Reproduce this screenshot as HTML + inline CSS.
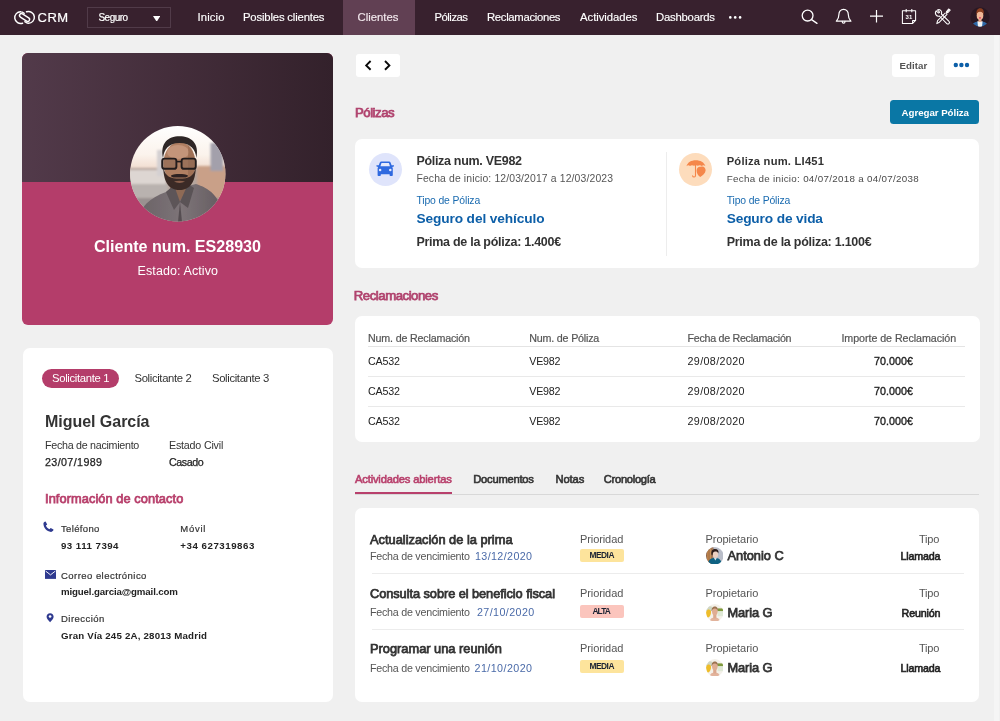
<!DOCTYPE html>
<html lang="es"><head><meta charset="utf-8"><title>CRM - Cliente ES28930</title>
<style>
html,body{margin:0;padding:0}
body{width:1000px;height:721px;position:relative;overflow:hidden;background:#f0f0f0;font-family:"Liberation Sans",sans-serif}
.abs{position:absolute;display:block}
.t{position:absolute;white-space:nowrap;line-height:1;margin:0;padding:0}
#wrap{position:absolute;left:0;top:0;width:1000px;height:721px;will-change:transform}
</style></head><body><div id="wrap">
<!-- NAV -->
<div class="abs" style="left:0;top:0;width:1000px;height:34.6px;background:#38212e"></div>
<div class="abs" style="left:343px;top:0;width:72px;height:34.6px;background:#614053"></div>
<div class="abs" style="left:87.3px;top:7.4px;width:83.3px;height:21px;box-sizing:border-box;border:1px solid #513b49"></div>
<svg class="abs" style="left:153px;top:15.5px" width="7.4" height="5.8" viewBox="0 0 7.4 5.8"><path d="M0 0H7.4L3.7 5.8Z" fill="#fff"/></svg>
<!-- logo -->
<svg class="abs" style="left:10px;top:6px" width="30" height="22" viewBox="10 6 30 22">
 <g fill="none" stroke="#fff" stroke-width="1.45" stroke-linecap="round" stroke-linejoin="round">
  <path d="M22.6 23.2A5.9 5.9 0 1 1 21 11.75C22.6 11.8 23.2 12.6 24.2 13.4"/>
  <path d="M26.5 11.8A5.9 5.9 0 1 1 28.1 23.25C26.5 23.2 25.9 22.4 24.9 21.6"/>
  <rect x="-5.6" y="-1.9" width="11.2" height="3.8" rx="1.9" transform="translate(24.55,17.5) rotate(33)"/>
 </g>
</svg>
<!-- nav dots -->
<svg class="abs" style="left:728px;top:14px" width="16" height="8" viewBox="0 0 16 8"><g fill="#fff"><circle cx="2.3" cy="3.4" r="1.3"/><circle cx="7.2" cy="3.4" r="1.3"/><circle cx="12.1" cy="3.4" r="1.3"/></g></svg>
<!-- search -->
<svg class="abs" style="left:800px;top:8px" width="20" height="18" viewBox="0 0 20 18"><g fill="none" stroke="#fff" stroke-width="1.3" stroke-linecap="round"><circle cx="7.6" cy="7.6" r="5.4"/><path d="M11.6 11.6L17 15.4"/></g></svg>
<!-- bell -->
<svg class="abs" style="left:834px;top:8px" width="20" height="18" viewBox="0 0 20 18"><g fill="none" stroke="#fff" stroke-width="1.2" stroke-linejoin="round" stroke-linecap="round"><path d="M9.6 1.4C6.6 1.4 4.9 3.8 4.9 6.6C4.9 9.6 4.2 11.4 2.3 13.2H16.9C15 11.4 14.3 9.6 14.3 6.6C14.3 3.8 12.6 1.4 9.6 1.4Z"/><path d="M8.2 13.4C8.2 14.6 8.8 15.2 9.6 15.2C10.4 15.2 11 14.6 11 13.4"/></g></svg>
<!-- plus -->
<svg class="abs" style="left:868px;top:8px" width="18" height="18" viewBox="0 0 18 18"><path d="M8.5 1.9V14.5M2 8.2H15" stroke="#fff" stroke-width="1.2" fill="none"/></svg>
<!-- calendar -->
<svg class="abs" style="left:900px;top:7px" width="18" height="19" viewBox="0 0 18 19"><g fill="none" stroke="#fff" stroke-width="1.05" stroke-linejoin="round"><path d="M2.4 3.8H15.6V13.4L12.6 16.4H2.4Z"/><path d="M6.2 2V5.2M11.8 2V5.2"/><path d="M12.6 16.4V13.4H15.6"/></g><text x="8.9" y="12.2" font-family="Liberation Sans, sans-serif" font-size="6" font-weight="700" fill="#fff" text-anchor="middle">31</text></svg>
<!-- tools -->
<svg class="abs" style="left:933px;top:8px" width="19" height="18" viewBox="0 0 19 18"><g transform="translate(19,0) scale(-1,1)" fill="none" stroke="#fff" stroke-width="1.05" stroke-linecap="round" stroke-linejoin="round"><path d="M3 1.6L5.8 5.4M5 6.4L12.6 14.2L15.2 15.6L14.4 12.6L6.8 5"/><path d="M15.8 2.8L13.6 5L12.4 4.2L14.6 2C13.2 1.4 11.6 1.8 10.8 3C10.2 4 10.2 5 10.6 6L3 13.4C2.4 14 2.4 15 3 15.6C3.6 16.2 4.6 16.2 5.2 15.6L12.6 8C13.8 8.4 15 8.2 15.8 7.2C16.6 6.2 16.8 4.2 15.8 2.8Z"/><path d="M1.8 2.2L3.4 1L5.6 3.8L4.4 4.8Z"/></g></svg>
<!-- nav avatar -->
<svg class="abs" style="left:970.2px;top:6.6px" width="20" height="20" viewBox="0 0 20 20"><defs><clipPath id="cpn"><circle cx="10" cy="10" r="9.7"/></clipPath></defs><circle cx="10" cy="10" r="9.7" fill="#2a1823"/><g clip-path="url(#cpn)"><path d="M1.6 20C2 15.6 5.4 14.4 10 14.4C14.6 14.4 18 15.6 18.4 20Z" fill="#2e68a6"/><path d="M7.4 14.2L8 20H12L12.6 14.2Z" fill="#f3f3f3"/><rect x="8.5" y="11" width="3" height="4" fill="#e9ab8c"/><ellipse cx="10" cy="8.4" rx="3.3" ry="4.3" fill="#f0b797"/><path d="M6.5 8C5.8 3.6 7.6 1.2 10.2 1.2C13 1.2 14.4 3.8 13.6 8C13.2 5.8 12.2 4.8 10 4.8C8 4.8 7 5.8 6.5 8Z" fill="#8c3f20"/><ellipse cx="10" cy="10.9" rx="1.1" ry="0.8" fill="#e0456b"/></g></svg>

<!-- PROFILE CARD -->
<div class="abs" style="left:22px;top:52.6px;width:311px;height:272px;border-radius:6px;overflow:hidden;background:#b43d6a">
  <div style="position:absolute;left:0;top:0;width:311px;height:129.2px;background:linear-gradient(90deg,#523a4a 0%,#432d3a 50%,#33212b 100%)"></div>
</div>
<!-- photo -->
<svg class="abs" style="left:130px;top:126.3px" width="95.6" height="95.6" viewBox="0 0 95.6 95.6">
 <defs><clipPath id="cpp"><circle cx="47.8" cy="47.8" r="47.7"/></clipPath>
 <linearGradient id="sky" x1="0" y1="0" x2="0" y2="1"><stop offset="0" stop-color="#ffffff"/><stop offset="0.3" stop-color="#fbf3ec"/><stop offset="0.47" stop-color="#efd9cb"/></linearGradient>
 <linearGradient id="shirt" x1="0" y1="0" x2="1" y2="0"><stop offset="0" stop-color="#6a6266"/><stop offset="0.5" stop-color="#7d7478"/><stop offset="1" stop-color="#625a5e"/></linearGradient>
 <filter id="bl" x="-10%" y="-10%" width="120%" height="120%"><feGaussianBlur stdDeviation="1.1"/></filter>
 <filter id="bl2" x="-10%" y="-10%" width="120%" height="120%"><feGaussianBlur stdDeviation="0.5"/></filter></defs>
 <g clip-path="url(#cpp)">
  <rect width="95.6" height="95.6" fill="url(#sky)"/>
  <g filter="url(#bl)">
   <rect x="-4" y="42" width="104" height="60" fill="#b5a59d"/>
   <rect x="-4" y="44" width="40" height="16" fill="#ddd6d2"/>
   <rect x="-4" y="58" width="42" height="18" fill="#b9b2af"/>
   <rect x="27" y="24" width="6" height="26" fill="#d4d0d2"/>
   <rect x="67" y="40" width="32" height="36" fill="#c9a088"/>
   <rect x="80.5" y="17" width="12.5" height="28" fill="#a3a0ab"/>
   <rect x="-4" y="72" width="104" height="30" fill="#9a9190"/>
  </g>
  <g filter="url(#bl2)">
   <path d="M8 96C10 80 20 72 36 66L44 60H58L66 58C78 62 90 68 96 96Z" fill="url(#shirt)"/>
   <path d="M40 62L49 76L60 60L55 54H43Z" fill="#8e6a55"/>
   <path d="M36 66L44 59L50 76L44 84Z" fill="#5d5559"/>
   <path d="M64 62L58 58L50 76L58 82Z" fill="#5a5256"/>
   <path d="M50 76L52 96H48Z" fill="#554d51"/>
   <ellipse cx="49.5" cy="37" rx="16" ry="21" fill="#b07f62"/>
   <ellipse cx="48" cy="26" rx="11" ry="7" fill="#c4957a"/>
   <path d="M33 32C30 17 38 10.2 49.5 10.2C61 10.2 69.6 17 66.4 32C65.6 24 61 17 49.5 17C38 17 34 24 33 32Z" fill="#2e2725"/><path d="M58 18C63 22 65.4 30 65.4 44C65.4 52 62 58 58 60Z" fill="#8e6149" fill-opacity="0.45"/>
   <path d="M33.2 42C34 58 40 64 49.5 64C59 64 65 58 65.8 42C63 51 58.5 52.5 49.5 52.5C40.5 52.5 36 51 33.2 42Z" fill="#3a2b26"/>
   <path d="M41 49.5C45 47.6 54 47.6 58 49.5C58 52 55 51.4 49.5 51.4C44 51.4 41 52 41 49.5Z" fill="#2f2320"/>
   <path d="M44 55.5C47 54.6 52 54.6 55 55.5C52 57.4 47 57.4 44 55.5Z" fill="#8a5f4c"/>
   <g fill="#8d6753" fill-opacity="0.55" stroke="#241c1d" stroke-width="1.9"><rect x="32.2" y="32.6" width="14.2" height="10.2" rx="2.4"/><rect x="51.6" y="32.6" width="14.2" height="10.2" rx="2.4"/></g>
   <path d="M46.4 35.6H51.6" stroke="#241c1d" stroke-width="1.6"/>
  </g>
 </g>
</svg>

<!-- APPLICANT CARD -->
<div class="abs" style="left:22.5px;top:347.5px;width:310.5px;height:354px;border-radius:7px;background:#fff"></div>
<div class="abs" style="left:41.8px;top:369.3px;width:77.7px;height:19px;border-radius:9.5px;background:#b43d6a"></div>
<!-- phone -->
<svg class="abs" style="left:43.4px;top:520.8px" width="11" height="11.4" viewBox="0 0 11 11.4"><path d="M2.6 0.5L4.2 3.4L2.9 4.6C3.6 6.2 4.8 7.5 6.4 8.3L7.7 7L10.5 8.6C10.4 9.9 9.3 11 8 10.9C3.6 10.4 0.6 7 0.4 2.8C0.4 1.6 1.3 0.6 2.6 0.5Z" fill="#2f3a8f"/></svg>
<!-- mail -->
<svg class="abs" style="left:45.1px;top:569.9px" width="11" height="8.9" viewBox="0 0 11 8.4" preserveAspectRatio="none"><path d="M0 0H11V8.4H0Z" fill="#2f3a8f"/><path d="M0.6 1L5.5 4.6L10.4 1" fill="none" stroke="#fff" stroke-width="0.9"/></svg>
<!-- pin -->
<svg class="abs" style="left:46px;top:613.2px" width="8.2" height="9.4" viewBox="0 0 8.8 10.6"><path d="M4.4 0.2C2 0.2 0.4 2 0.4 4.1C0.4 6.6 3 8.6 4.4 10.4C5.8 8.6 8.4 6.6 8.4 4.1C8.4 2 6.8 0.2 4.4 0.2Z" fill="#2f3a8f"/><circle cx="4.4" cy="4" r="1.5" fill="#fff"/></svg>

<!-- RIGHT COLUMN -->
<div class="abs" style="left:356px;top:54px;width:44px;height:22.7px;border-radius:3px;background:#fff"></div>
<svg class="abs" style="left:356px;top:54px" width="44" height="22.7" viewBox="0 0 44 22.7"><g fill="none" stroke="#0a0a0a" stroke-width="1.9" stroke-linecap="butt" stroke-linejoin="miter"><path d="M14.6 7L10.2 11.4L14.6 15.8"/><path d="M29 7L33.4 11.4L29 15.8"/></g></svg>
<div class="abs" style="left:892px;top:54px;width:43px;height:22.7px;border-radius:3.5px;background:#fff"></div>
<div class="abs" style="left:943.8px;top:54px;width:35.4px;height:22.7px;border-radius:3.5px;background:#fff"></div>
<svg class="abs" style="left:952px;top:61px" width="20" height="8" viewBox="0 0 20 8"><g fill="#0c5fa8"><circle cx="3.8" cy="4" r="2.2"/><circle cx="9.4" cy="4" r="2.2"/><circle cx="15" cy="4" r="2.2"/></g></svg>
<div class="abs" style="left:889.7px;top:100px;width:89.8px;height:24px;border-radius:3.5px;background:#0a77a5"></div>

<!-- policies card -->
<div class="abs" style="left:355px;top:139px;width:624px;height:128.8px;border-radius:7px;background:#fff"></div>
<div class="abs" style="left:666px;top:152px;width:1px;height:104px;background:#ededed"></div>
<div class="abs" style="left:369px;top:152.5px;width:33px;height:33px;border-radius:50%;background:#dfe4fb"></div>
<svg class="abs" style="left:376px;top:160.8px" width="18.4" height="15.4" viewBox="0 0 18.4 15.4"><path d="M5.4 0.5H13C13.8 0.5 14.4 0.9 14.7 1.7L15.6 4.3L17.6 4.2C18.2 4.2 18.3 5.2 17.8 5.4L16.2 6.1C16.6 6.5 16.8 7 16.8 7.6V14.2C16.8 14.7 16.5 15 16 15H14.4C13.9 15 13.6 14.7 13.6 14.2V13.2H4.8V14.2C4.8 14.7 4.5 15 4 15H2.4C1.9 15 1.6 14.7 1.6 14.2V7.6C1.6 7 1.8 6.5 2.2 6.1L0.6 5.4C0.1 5.2 0.2 4.2 0.8 4.2L2.8 4.3L3.7 1.7C4 0.9 4.6 0.5 5.4 0.5Z" fill="#2f69e0"/><path d="M5.5 2H12.9L14 5.2H4.4Z" fill="#e6eafc"/><circle cx="4.1" cy="9" r="1.25" fill="#e6eafc"/><circle cx="14.3" cy="9" r="1.25" fill="#e6eafc"/></svg>
<div class="abs" style="left:679px;top:152.5px;width:33px;height:33px;border-radius:50%;background:#fddcbc"></div>
<svg class="abs" style="left:686px;top:159.6px" width="20" height="19" viewBox="0 0 20 19"><path d="M0.5 6.2C1.6 2.4 5.2 0.3 9.8 0.3C14.4 0.3 18.2 2.4 19.4 6.2C18.4 5.2 17 5 15.8 5.9C14.6 5 13 5 11.8 5.8C10.8 5.1 9 5.1 8 5.8C6.8 5 5.2 5 4 5.9C2.8 5 1.6 5.2 0.5 6.2Z" fill="#f5874a"/><path d="M9.5 5.4V15.6C9.5 17.4 6.9 17.6 6.6 15.8" fill="none" stroke="#f5874a" stroke-width="1.1" stroke-linecap="round"/><path d="M14.2 17C12 15.4 10.6 13.6 10.6 10.6C10.6 7.4 13 6.2 15 6.8C17.6 5.8 19.8 8 19.6 10.6C19.4 13.6 16.6 15.6 14.2 17Z" fill="#f5874a"/></svg>

<!-- reclamaciones card -->
<div class="abs" style="left:355px;top:316.3px;width:625px;height:125.8px;border-radius:7px;background:#fff"></div>
<div class="abs" style="left:368px;top:346px;width:597px;height:1px;background:#e4e4e4"></div>
<div class="abs" style="left:368px;top:376px;width:597px;height:1px;background:#e9e9e9"></div>
<div class="abs" style="left:368px;top:406px;width:597px;height:1px;background:#e9e9e9"></div>

<!-- tabs -->
<div class="abs" style="left:355px;top:494px;width:624px;height:1px;background:#d8d8d8"></div>
<div class="abs" style="left:355px;top:492px;width:97px;height:2.4px;background:#b8406c"></div>

<!-- activities card -->
<div class="abs" style="left:355px;top:508.2px;width:624px;height:193.6px;border-radius:7px;background:#fff"></div>
<div class="abs" style="left:372px;top:572.6px;width:592px;height:1px;background:#ececec"></div>
<div class="abs" style="left:372px;top:629px;width:592px;height:1px;background:#ececec"></div>
<div class="abs" style="left:579.5px;top:549.4px;width:44.5px;height:12.4px;border-radius:2px;background:#fde49c"></div>
<div class="abs" style="left:579.5px;top:605.2px;width:44.5px;height:12.4px;border-radius:2px;background:#fbc5bd"></div>
<div class="abs" style="left:579.5px;top:660.1px;width:44.5px;height:12.5px;border-radius:2px;background:#fde49c"></div>
<!-- avatars -->
<svg class="abs" style="left:705.5px;top:546.7px" width="17.6" height="17.6" viewBox="0 0 17.6 17.6"><defs><clipPath id="cpa"><circle cx="8.8" cy="8.8" r="8.7"/></clipPath></defs><g clip-path="url(#cpa)"><rect width="17.6" height="17.6" fill="#b9bdc8"/><rect x="0" y="0" width="7.4" height="17.6" fill="#8a5a3a"/><rect x="1.4" y="2" width="1.1" height="13" fill="#d99a55"/><rect x="3.6" y="1" width="1.1" height="13" fill="#e0a868"/><rect x="5.6" y="1" width="0.9" height="12" fill="#caa07a"/><path d="M1.6 17.6C2 13 5 11 8.6 10.8C12.6 10.8 15.6 13 16.2 17.6Z" fill="#0f6283"/><path d="M7.6 10.6L9.4 13.6L11 10.8Z" fill="#d8e2e6"/><ellipse cx="9.4" cy="7.4" rx="2.7" ry="3.4" fill="#ecd0c0"/><path d="M5.6 8C4.6 3.6 7 2 9.2 2C11.6 2 13 3.6 12.4 6.4C11.6 5 10.6 4.4 9.2 4.6C7.4 4.8 6.6 6 6.6 8.6Z" fill="#2c1c18"/></g></svg>
<svg class="abs" style="left:705.5px;top:603.7px" width="17.6" height="17.6" viewBox="0 0 17.6 17.6"><defs><clipPath id="cpb"><circle cx="8.8" cy="8.8" r="8.7"/></clipPath></defs><g clip-path="url(#cpb)"><rect width="17.6" height="17.6" fill="#f4f1ea"/><path d="M0 4C2 2 5 1.6 6.4 3V7H0Z" fill="#cfd6c4"/><path d="M0.2 7C2 4.6 4.6 5 5 7.4C5.2 10 4 13.4 1.4 13.8C0 12 -0.2 9 0.2 7Z" fill="#eebd2a"/><rect x="11.6" y="4.4" width="6" height="3" fill="#7f9a3c"/><rect x="11.6" y="7.2" width="6" height="5" fill="#dfe8d6"/><path d="M3.6 17.6C4 14.6 6 13.4 8.8 13.4C11.6 13.4 13.6 14.6 14 17.6Z" fill="#e2b39c"/><rect x="7.2" y="10" width="3.2" height="4.4" fill="#dba88e"/><ellipse cx="8.8" cy="7.6" rx="2.8" ry="3.6" fill="#e0ad92"/><path d="M5.8 7.4C5.2 3.8 7 2.4 8.8 2.4C10.8 2.4 12.4 3.8 11.8 7.4C11.4 5.4 10.4 4.6 8.8 4.6C7.2 4.6 6.2 5.4 5.8 7.4Z" fill="#9c7350"/></g></svg>
<svg class="abs" style="left:705.5px;top:658.9px" width="17.6" height="17.6" viewBox="0 0 17.6 17.6"><defs><clipPath id="cpc"><circle cx="8.8" cy="8.8" r="8.7"/></clipPath></defs><g clip-path="url(#cpc)"><rect width="17.6" height="17.6" fill="#f4f1ea"/><path d="M0 4C2 2 5 1.6 6.4 3V7H0Z" fill="#cfd6c4"/><path d="M0.2 7C2 4.6 4.6 5 5 7.4C5.2 10 4 13.4 1.4 13.8C0 12 -0.2 9 0.2 7Z" fill="#eebd2a"/><rect x="11.6" y="4.4" width="6" height="3" fill="#7f9a3c"/><rect x="11.6" y="7.2" width="6" height="5" fill="#dfe8d6"/><path d="M3.6 17.6C4 14.6 6 13.4 8.8 13.4C11.6 13.4 13.6 14.6 14 17.6Z" fill="#e2b39c"/><rect x="7.2" y="10" width="3.2" height="4.4" fill="#dba88e"/><ellipse cx="8.8" cy="7.6" rx="2.8" ry="3.6" fill="#e0ad92"/><path d="M5.8 7.4C5.2 3.8 7 2.4 8.8 2.4C10.8 2.4 12.4 3.8 11.8 7.4C11.4 5.4 10.4 4.6 8.8 4.6C7.2 4.6 6.2 5.4 5.8 7.4Z" fill="#9c7350"/></g></svg>
<!-- scrollbar strip -->
<div class="abs" style="left:994.3px;top:34.6px;width:4.6px;height:687px;background:#f5f5f5"></div>
<span class="t" style="left:37.50px;top:11.00px;font-size:13px;color:#ffffff;letter-spacing:0.545px;-webkit-text-stroke:0.2px #ffffff;">CRM</span>
<span class="t" style="left:98.50px;top:13.00px;font-size:10px;color:#ffffff;letter-spacing:-0.550px;-webkit-text-stroke:0.2px #ffffff;">Seguro</span>
<span class="t" style="left:197.50px;top:12.00px;font-size:11.3px;color:#ffffff;letter-spacing:0.125px;-webkit-text-stroke:0.15px #ffffff;">Inicio</span>
<span class="t" style="left:243.00px;top:12.00px;font-size:11.3px;color:#ffffff;letter-spacing:-0.166px;-webkit-text-stroke:0.15px #ffffff;">Posibles clientes</span>
<span class="t" style="left:357.50px;top:12.00px;font-size:11.3px;color:#f3e9ee;letter-spacing:0.025px;-webkit-text-stroke:0.15px #f3e9ee;">Clientes</span>
<span class="t" style="left:434.50px;top:12.00px;font-size:11.3px;color:#ffffff;letter-spacing:-0.487px;-webkit-text-stroke:0.15px #ffffff;">Pólizas</span>
<span class="t" style="left:487.00px;top:12.00px;font-size:11.3px;color:#ffffff;letter-spacing:-0.311px;-webkit-text-stroke:0.15px #ffffff;">Reclamaciones</span>
<span class="t" style="left:580.00px;top:12.00px;font-size:11.3px;color:#ffffff;letter-spacing:-0.028px;-webkit-text-stroke:0.15px #ffffff;">Actividades</span>
<span class="t" style="left:656.00px;top:12.00px;font-size:11.3px;color:#ffffff;letter-spacing:-0.214px;-webkit-text-stroke:0.15px #ffffff;">Dashboards</span>
<span class="t" style="left:94.00px;top:238.00px;font-size:16.1px;color:#ffffff;font-weight:700;letter-spacing:-0.014px;">Cliente num. ES28930</span>
<span class="t" style="left:137.60px;top:265.00px;font-size:12.5px;color:#ffffff;letter-spacing:0.091px;">Estado: Activo</span>
<span class="t" style="left:52.00px;top:373.00px;font-size:11.3px;color:#ffffff;letter-spacing:-0.337px;">Solicitante 1</span>
<span class="t" style="left:134.50px;top:373.00px;font-size:11.3px;color:#333333;letter-spacing:-0.354px;">Solicitante 2</span>
<span class="t" style="left:212.00px;top:373.00px;font-size:11.3px;color:#333333;letter-spacing:-0.354px;">Solicitante 3</span>
<span class="t" style="left:45.00px;top:414.00px;font-size:16px;color:#333333;font-weight:700;letter-spacing:-0.035px;">Miguel García</span>
<span class="t" style="left:45.00px;top:440.00px;font-size:10.7px;color:#333333;letter-spacing:-0.273px;">Fecha de nacimiento</span>
<span class="t" style="left:169.00px;top:440.00px;font-size:10.7px;color:#333333;letter-spacing:-0.194px;">Estado Civil</span>
<span class="t" style="left:45.00px;top:457.00px;font-size:10.7px;color:#222222;letter-spacing:0.389px;-webkit-text-stroke:0.25px #222222;">23/07/1989</span>
<span class="t" style="left:169.00px;top:457.00px;font-size:10.7px;color:#222222;letter-spacing:-0.409px;-webkit-text-stroke:0.25px #222222;">Casado</span>
<span class="t" style="left:45.00px;top:493.00px;font-size:12.8px;color:#b8406c;letter-spacing:0.078px;-webkit-text-stroke:0.75px #b8406c;">Información de contacto</span>
<span class="t" style="left:61.00px;top:524.00px;font-size:9.5px;color:#333333;letter-spacing:0.340px;-webkit-text-stroke:0.2px #333333;">Teléfono</span>
<span class="t" style="left:180.30px;top:524.00px;font-size:9.5px;color:#333333;letter-spacing:0.732px;-webkit-text-stroke:0.2px #333333;">Móvil</span>
<span class="t" style="left:61.00px;top:541.00px;font-size:9.7px;color:#222222;font-weight:700;letter-spacing:0.469px;">93 111 7394</span>
<span class="t" style="left:180.30px;top:541.00px;font-size:9.7px;color:#222222;font-weight:700;letter-spacing:0.531px;">+34 627319863</span>
<span class="t" style="left:61.00px;top:571.00px;font-size:9.5px;color:#333333;letter-spacing:0.457px;-webkit-text-stroke:0.2px #333333;">Correo electrónico</span>
<span class="t" style="left:61.00px;top:587.00px;font-size:9.7px;color:#222222;font-weight:700;letter-spacing:-0.132px;">miguel.garcia@gmail.com</span>
<span class="t" style="left:61.00px;top:614.00px;font-size:9.5px;color:#333333;letter-spacing:0.474px;-webkit-text-stroke:0.2px #333333;">Dirección</span>
<span class="t" style="left:61.00px;top:631.00px;font-size:9.7px;color:#222222;font-weight:700;letter-spacing:0.195px;">Gran Vía 245 2A, 28013 Madrid</span>
<span class="t" style="left:899.60px;top:61.00px;font-size:9.7px;color:#555555;font-weight:700;letter-spacing:0.026px;">Editar</span>
<span class="t" style="left:355.00px;top:106.00px;font-size:13.2px;color:#b0436e;letter-spacing:-0.486px;-webkit-text-stroke:0.75px #b0436e;">Pólizas</span>
<span class="t" style="left:901.60px;top:108.00px;font-size:9.7px;color:#ffffff;font-weight:700;letter-spacing:-0.034px;">Agregar Póliza</span>
<span class="t" style="left:416.40px;top:155.00px;font-size:12.5px;color:#333333;font-weight:700;letter-spacing:-0.304px;">Póliza num. VE982</span>
<span class="t" style="left:416.40px;top:174.00px;font-size:10.4px;color:#555555;letter-spacing:0.138px;">Fecha de inicio: 12/03/2017 a 12/03/2023</span>
<span class="t" style="left:416.40px;top:196.00px;font-size:10.4px;color:#1a6bb0;letter-spacing:-0.128px;">Tipo de Póliza</span>
<span class="t" style="left:416.40px;top:212.00px;font-size:13.7px;color:#0d5fa8;font-weight:700;letter-spacing:-0.103px;">Seguro del vehículo</span>
<span class="t" style="left:416.40px;top:236.00px;font-size:12.5px;color:#333333;font-weight:700;letter-spacing:-0.267px;">Prima de la póliza: 1.400€</span>
<span class="t" style="left:726.70px;top:156.00px;font-size:11.2px;color:#333333;font-weight:700;letter-spacing:0.213px;">Póliza num. LI451</span>
<span class="t" style="left:726.70px;top:174.00px;font-size:9.8px;color:#4a4a4a;letter-spacing:0.300px;">Fecha de inicio: 04/07/2018 a 04/07/2038</span>
<span class="t" style="left:726.70px;top:196.00px;font-size:10.4px;color:#1a6bb0;letter-spacing:-0.144px;">Tipo de Póliza</span>
<span class="t" style="left:726.70px;top:212.00px;font-size:13.7px;color:#0d5fa8;font-weight:700;letter-spacing:-0.140px;">Seguro de vida</span>
<span class="t" style="left:726.70px;top:236.00px;font-size:12.5px;color:#333333;font-weight:700;letter-spacing:-0.259px;">Prima de la póliza: 1.100€</span>
<span class="t" style="left:353.80px;top:289.00px;font-size:13.2px;color:#b0436e;letter-spacing:-0.471px;-webkit-text-stroke:0.75px #b0436e;">Reclamaciones</span>
<span class="t" style="left:368.00px;top:333.00px;font-size:10.7px;color:#555555;letter-spacing:-0.174px;-webkit-text-stroke:0.2px #555555;">Num. de Reclamación</span>
<span class="t" style="left:529.30px;top:333.00px;font-size:10.7px;color:#555555;letter-spacing:-0.191px;-webkit-text-stroke:0.2px #555555;">Num. de Póliza</span>
<span class="t" style="left:687.50px;top:333.00px;font-size:10.7px;color:#555555;letter-spacing:-0.280px;-webkit-text-stroke:0.2px #555555;">Fecha de Reclamación</span>
<span class="t" style="left:841.40px;top:333.00px;font-size:10.7px;color:#555555;letter-spacing:-0.050px;-webkit-text-stroke:0.2px #555555;">Importe de Reclamación</span>
<span class="t" style="left:368.00px;top:356.00px;font-size:10.7px;color:#222222;letter-spacing:-0.172px;">CA532</span>
<span class="t" style="left:529.30px;top:356.00px;font-size:10.7px;color:#222222;letter-spacing:-0.223px;">VE982</span>
<span class="t" style="left:687.50px;top:356.00px;font-size:10.7px;color:#222222;letter-spacing:0.389px;">29/08/2020</span>
<span class="t" style="left:874.10px;top:356.00px;font-size:10.7px;color:#222222;letter-spacing:0.043px;-webkit-text-stroke:0.35px #222222;">70.000€</span>
<span class="t" style="left:368.00px;top:386.00px;font-size:10.7px;color:#222222;letter-spacing:-0.172px;">CA532</span>
<span class="t" style="left:529.30px;top:386.00px;font-size:10.7px;color:#222222;letter-spacing:-0.223px;">VE982</span>
<span class="t" style="left:687.50px;top:386.00px;font-size:10.7px;color:#222222;letter-spacing:0.389px;">29/08/2020</span>
<span class="t" style="left:874.10px;top:386.00px;font-size:10.7px;color:#222222;letter-spacing:0.043px;-webkit-text-stroke:0.35px #222222;">70.000€</span>
<span class="t" style="left:368.00px;top:416.00px;font-size:10.7px;color:#222222;letter-spacing:-0.172px;">CA532</span>
<span class="t" style="left:529.30px;top:416.00px;font-size:10.7px;color:#222222;letter-spacing:-0.223px;">VE982</span>
<span class="t" style="left:687.50px;top:416.00px;font-size:10.7px;color:#222222;letter-spacing:0.389px;">29/08/2020</span>
<span class="t" style="left:874.10px;top:416.00px;font-size:10.7px;color:#222222;letter-spacing:0.043px;-webkit-text-stroke:0.35px #222222;">70.000€</span>
<span class="t" style="left:355.00px;top:474.00px;font-size:11.2px;color:#b8406c;letter-spacing:-0.175px;-webkit-text-stroke:0.6px #b8406c;">Actividades abiertas</span>
<span class="t" style="left:473.30px;top:474.00px;font-size:11.2px;color:#333333;letter-spacing:-0.257px;-webkit-text-stroke:0.6px #333333;">Documentos</span>
<span class="t" style="left:555.50px;top:474.00px;font-size:11.2px;color:#333333;letter-spacing:-0.109px;-webkit-text-stroke:0.6px #333333;">Notas</span>
<span class="t" style="left:603.80px;top:474.00px;font-size:11.2px;color:#333333;letter-spacing:-0.304px;-webkit-text-stroke:0.6px #333333;">Cronología</span>
<span class="t" style="left:370.00px;top:534.00px;font-size:12.8px;color:#333333;letter-spacing:0.010px;-webkit-text-stroke:0.75px #333333;">Actualización de la prima</span>
<span class="t" style="left:370.00px;top:551.00px;font-size:10.7px;color:#555555;letter-spacing:-0.240px;">Fecha de vencimiento</span>
<span class="t" style="left:475.00px;top:551.00px;font-size:10.7px;color:#4a6aa8;letter-spacing:0.389px;">13/12/2020</span>
<span class="t" style="left:580.00px;top:534.00px;font-size:11px;color:#555555;letter-spacing:-0.091px;">Prioridad</span>
<span class="t" style="left:589.50px;top:551.00px;font-size:8.4px;color:#1a2233;font-weight:700;letter-spacing:-0.500px;">MEDIA</span>
<span class="t" style="left:705.50px;top:534.00px;font-size:11px;color:#555555;letter-spacing:-0.040px;">Propietario</span>
<span class="t" style="left:727.50px;top:550.00px;font-size:12.8px;color:#333333;letter-spacing:0.012px;-webkit-text-stroke:0.75px #333333;">Antonio C</span>
<span class="t" style="left:918.90px;top:534.00px;font-size:11px;color:#555555;letter-spacing:-0.200px;">Tipo</span>
<span class="t" style="left:900.60px;top:551.00px;font-size:10.7px;color:#222222;letter-spacing:-0.183px;-webkit-text-stroke:0.6px #222222;">Llamada</span>
<span class="t" style="left:370.00px;top:588.00px;font-size:12.8px;color:#333333;letter-spacing:-0.063px;-webkit-text-stroke:0.75px #333333;">Consulta sobre el beneficio fiscal</span>
<span class="t" style="left:370.00px;top:607.00px;font-size:10.7px;color:#555555;letter-spacing:-0.240px;">Fecha de vencimiento</span>
<span class="t" style="left:477.00px;top:607.00px;font-size:10.7px;color:#4a6aa8;letter-spacing:0.422px;">27/10/2020</span>
<span class="t" style="left:580.00px;top:588.00px;font-size:11px;color:#555555;letter-spacing:-0.091px;">Prioridad</span>
<span class="t" style="left:592.50px;top:607.00px;font-size:8.4px;color:#1a2233;font-weight:700;letter-spacing:-0.931px;">ALTA</span>
<span class="t" style="left:705.50px;top:588.00px;font-size:11px;color:#555555;letter-spacing:-0.040px;">Propietario</span>
<span class="t" style="left:727.50px;top:607.00px;font-size:12.8px;color:#333333;letter-spacing:-0.086px;-webkit-text-stroke:0.75px #333333;">Maria G</span>
<span class="t" style="left:918.90px;top:588.00px;font-size:11px;color:#555555;letter-spacing:-0.200px;">Tipo</span>
<span class="t" style="left:901.60px;top:608.00px;font-size:10.7px;color:#222222;letter-spacing:-0.152px;-webkit-text-stroke:0.6px #222222;">Reunión</span>
<span class="t" style="left:370.00px;top:643.00px;font-size:12.8px;color:#333333;letter-spacing:0.010px;-webkit-text-stroke:0.75px #333333;">Programar una reunión</span>
<span class="t" style="left:370.00px;top:663.00px;font-size:10.7px;color:#555555;letter-spacing:-0.240px;">Fecha de vencimiento</span>
<span class="t" style="left:474.50px;top:663.00px;font-size:10.7px;color:#4a6aa8;letter-spacing:0.444px;">21/10/2020</span>
<span class="t" style="left:580.00px;top:643.00px;font-size:11px;color:#555555;letter-spacing:-0.091px;">Prioridad</span>
<span class="t" style="left:589.50px;top:662.00px;font-size:8.4px;color:#1a2233;font-weight:700;letter-spacing:-0.500px;">MEDIA</span>
<span class="t" style="left:705.50px;top:643.00px;font-size:11px;color:#555555;letter-spacing:-0.040px;">Propietario</span>
<span class="t" style="left:727.50px;top:662.00px;font-size:12.8px;color:#333333;letter-spacing:-0.086px;-webkit-text-stroke:0.75px #333333;">Maria G</span>
<span class="t" style="left:918.90px;top:643.00px;font-size:11px;color:#555555;letter-spacing:-0.200px;">Tipo</span>
<span class="t" style="left:900.60px;top:663.00px;font-size:10.7px;color:#222222;letter-spacing:-0.183px;-webkit-text-stroke:0.6px #222222;">Llamada</span>
</div></body></html>
